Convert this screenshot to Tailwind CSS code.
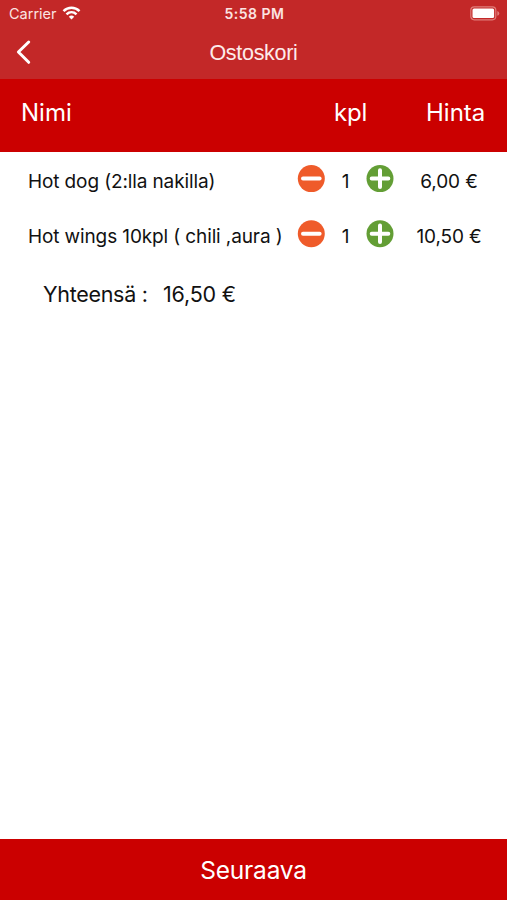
<!DOCTYPE html>
<html lang="fi">
<head>
  <meta charset="UTF-8">
  <meta name="viewport" content="width=device-width, initial-scale=1.0" />
  <title>Ostoskori</title>
  <!-- Tailwind CSS -->
  <script src="https://cdn.jsdelivr.net/npm/@tailwindcss/browser@4"></script>
</head>
<body class="bg-white text-[#111] font-['Inter',sans-serif]">
<div class="flex flex-col w-[507px] h-[900px] overflow-hidden">
  <header class="h-[79px] bg-[#c32828] text-white">
    <!-- Status bar -->
    <div class="grid grid-cols-3 items-center h-[27px] pl-[9px] pr-[7px] text-[#fbe4e2]">
      <div class="flex items-center gap-[5px]">
        <span class="text-[14.5px]">Carrier</span>
        <svg class="w-[19px] h-[14px] mb-[2px]" viewBox="0 0 18 14" fill="none" stroke="white" stroke-width="2.5">
          <path d="M1 5.2C5.6 .7 12.4 .7 17 5.2" />
          <path d="M4 8.3C6.9 5.5 11.1 5.5 14 8.3" />
          <path d="M9 13.5 6.3 10.7Q9 8.5 11.7 10.7Z" fill="white" stroke="none" />
        </svg>
      </div>
      <span class="text-center text-[14px] font-semibold tracking-[0.5px]">5:58 PM</span>
      <svg class="justify-self-end w-[30px] h-[15px]" viewBox="0 0 30 15">
        <rect x=".8" y=".8" width="25" height="13" rx="3.5" fill="none" stroke="#e07d7a" stroke-width="1.2" />
        <rect x="2.5" y="2.5" width="21.6" height="9.6" rx="1.5" fill="white" />
        <path d="M27.3 5v4.8Q29.3 9 29.3 7.4T27.3 5Z" fill="#e07d7a" />
      </svg>
    </div>
    <!-- Navigation bar -->
    <div class="grid grid-cols-3 items-center h-[50px] pl-4">
      <svg class="w-4 h-[26px]" viewBox="0 0 16 26" fill="none" stroke="white" stroke-width="3" stroke-linecap="round" stroke-linejoin="round">
        <path d="M12.7 3 2.4 13l10.3 10.3" />
      </svg>
      <h1 class="text-center pr-4 pt-[3px] font-['Liberation_Sans',sans-serif] text-[21.5px] tracking-[-0.3px] text-[#fdebea]">Ostoskori</h1>
    </div>
  </header>

  <div class="grid grid-cols-[313px_92px_102px] h-[73px] pt-[16px] leading-9 bg-[#cb0000] text-white text-[24px]">
    <span class="pl-[21px]">Nimi</span>
    <span class="pl-[21px] tracking-[-0.2px]">kpl</span>
    <span class="pl-[21px]">Hinta</span>
  </div>

  <main class="grow pt-px">
    <div class="grid grid-cols-[297px_28px_41px_28px_1fr] h-[55px] items-center text-[19px] tracking-[-0.12px]">
      <span class="pl-7 pt-[3px] whitespace-nowrap">Hot dog (2:lla nakilla)</span>
      <svg class="w-7 h-7 mb-[4px]" viewBox="0 0 28 28" stroke="white" stroke-width="4" stroke-linecap="round">
        <circle cx="14.3" cy="13.6" r="13.5" fill="#ef5b2a" stroke="none" />
        <path d="M6 13.6h16.6" />
      </svg>
      <span class="pt-[3px] text-center">1</span>
      <svg class="w-7 h-7 mb-[4px]" viewBox="0 0 28 28" stroke="white" stroke-width="4" stroke-linecap="round">
        <circle cx="14" cy="13.6" r="13.5" fill="#639e35" stroke="none" />
        <path d="M5.7 13.6h16.6M14 5.3v16.6" />
      </svg>
      <span class="pt-[3px] text-center pr-[3px]">6,00 €</span>
    </div>
    <div class="grid grid-cols-[297px_28px_41px_28px_1fr] h-[55px] items-center text-[19px] tracking-[-0.12px]">
      <span class="pl-7 pt-[3px] whitespace-nowrap">Hot wings 10kpl ( chili ,aura )</span>
      <svg class="w-7 h-7 mb-[4px]" viewBox="0 0 28 28" stroke="white" stroke-width="4" stroke-linecap="round">
        <circle cx="14.3" cy="13.8" r="13.5" fill="#ef5b2a" stroke="none" />
        <path d="M6 13.8h16.6" />
      </svg>
      <span class="pt-[3px] text-center">1</span>
      <svg class="w-7 h-7 mb-[4px]" viewBox="0 0 28 28" stroke="white" stroke-width="4" stroke-linecap="round">
        <circle cx="14" cy="13.8" r="13.5" fill="#639e35" stroke="none" />
        <path d="M5.7 13.8h16.6M14 5.5v16.6" />
      </svg>
      <span class="pt-[3px] text-center pr-[3px]">10,50 €</span>
    </div>
    <div class="flex pl-[43px] pt-[15px] leading-8 text-[21.5px] tracking-[-0.2px]">
      <span class="w-[120px] tracking-[-0.3px]">Yhteensä :</span>
      <span>16,50 €</span>
    </div>
  </main>

  <button class="h-[61px] pt-px bg-[#cb0000] text-white text-[24.5px] tracking-[-0.2px]">Seuraava</button>
</div>
</body>
</html>
